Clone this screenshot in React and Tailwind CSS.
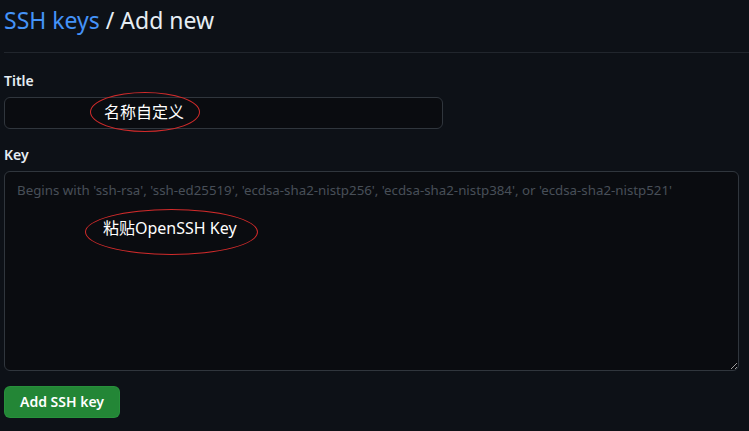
export default function App() {
  return (
    <div
      className="w-[749px] h-[431px] overflow-hidden bg-[#0d1117] text-[#e6edf3] pl-[4px] flex flex-col"
      style={{ fontFamily: '"Noto Sans", "Noto Sans CJK SC", sans-serif' }}
    >
      <div className="pt-[4px] pb-[16px] border-b border-[#21262d]">
        <h1 className="text-[23px] leading-[32px] font-normal">
          <a className="text-[#4493f8]">SSH keys</a> / Add new
        </h1>
      </div>

      <div className="mt-[18px] flex flex-col gap-[6px]">
        <label className="text-[14px] leading-[20px] font-semibold">Title</label>
        <div className="relative w-[439px]">
          <input
            className="w-full h-[32px] rounded-[6px] border border-[#30363d] bg-[#0a0c10] outline-none"
            readOnly
          />
          <span className="absolute left-[100px] top-[4px] text-[16px] leading-[22px] text-white">名称自定义</span>
          <span className="absolute left-[86px] top-[-5px] w-[110px] h-[40px] rounded-[50%] border border-[#d12b2b]" />
        </div>
      </div>

      <div className="mt-[16px] flex flex-col gap-[6px]">
        <label className="text-[14px] leading-[20px] font-semibold">Key</label>
        <div className="relative w-[735px]">
          <textarea
            className="block w-full h-[200px] rounded-[6px] border border-[#30363d] bg-[#0a0c10] px-[12px] py-[8px] text-[13.3px] leading-[20px] outline-none resize-y placeholder:text-[#484f58]"
            placeholder="Begins with 'ssh-rsa', 'ssh-ed25519', 'ecdsa-sha2-nistp256', 'ecdsa-sha2-nistp384', or 'ecdsa-sha2-nistp521'"
            readOnly
          />
          <span className="absolute left-[99px] top-[46px] text-[16px] leading-[22px] text-white">粘贴OpenSSH Key</span>
          <span className="absolute left-[81px] top-[38px] w-[173px] h-[46px] rounded-[50%] border border-[#d12b2b]" />
        </div>
      </div>

      <div className="mt-[15px]">
        <button className="h-[32px] px-[15px] rounded-[6px] bg-[#238636] border border-[#2ea043]/40 text-white text-[14px] font-semibold leading-[20px]">
          Add SSH key
        </button>
      </div>
    </div>
  );
}
